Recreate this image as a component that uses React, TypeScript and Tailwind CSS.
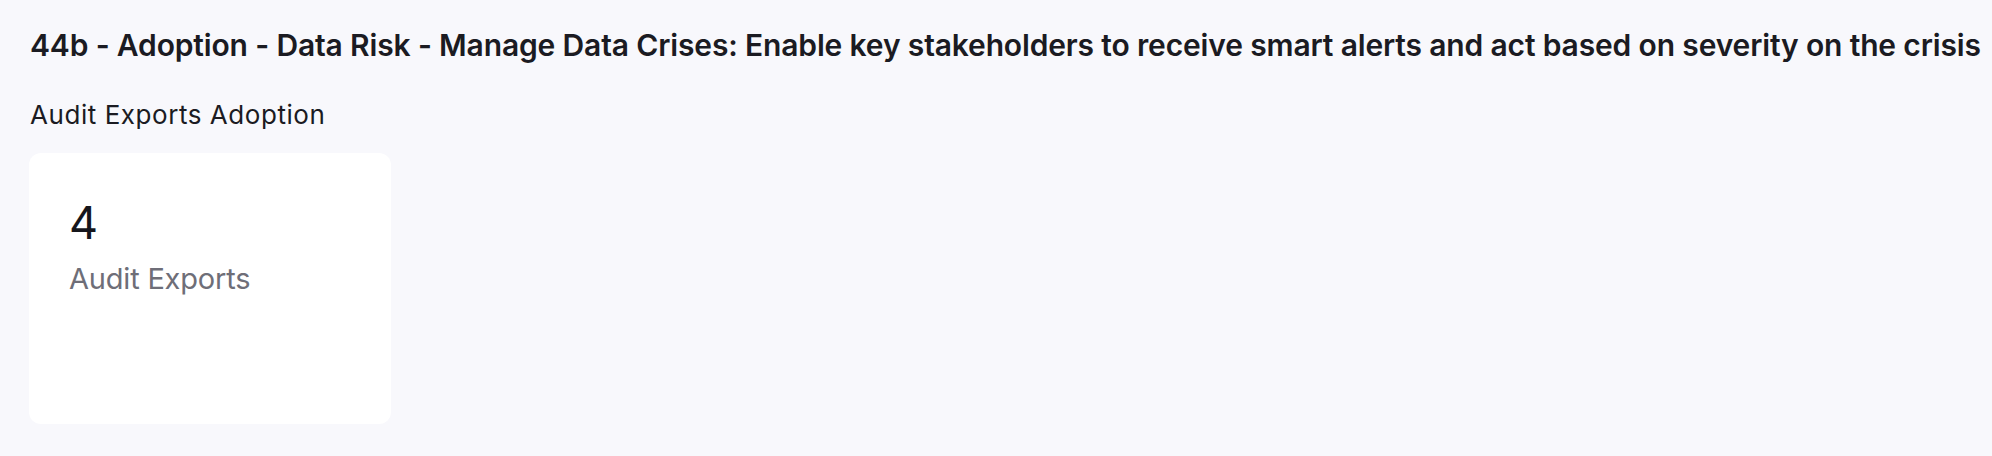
import React from "react";

export default function App() {
  return (
    <div
      className="w-[1992px] h-[456px] bg-[#f8f8fc] pl-[29px] pt-[27px] text-[#1b1b22] overflow-hidden"
      style={{ fontFamily: "Inter, 'Noto Sans', sans-serif" }}
    >
      <h1 className="pl-px text-[30px] leading-[36px] font-semibold tracking-[-0.15px] whitespace-nowrap">
        44b - Adoption - Data Risk - Manage Data Crises: Enable key stakeholders to receive smart alerts and act based on severity on the crisis
      </h1>
      <h2 className="pl-px mt-[37px] text-[26px] leading-[30px] font-normal tracking-[0.55px]">
        Audit Exports Adoption
      </h2>
      <div className="mt-[23px] w-[362px] h-[271px] bg-white rounded-[12px] pl-[40px] pt-[43px]">
        <div className="text-[45px] leading-[54px] text-[#16161c]">4</div>
        <div className="mt-[11px] text-[29px] leading-[36px] tracking-[-0.2px] text-[#6e6e78]">
          Audit Exports
        </div>
      </div>
    </div>
  );
}
